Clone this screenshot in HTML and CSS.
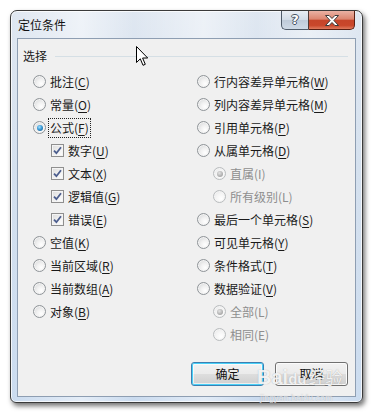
FILE: index.html
```html
<!DOCTYPE html>
<html>
<head>
<meta charset="utf-8">
<link rel="stylesheet" href="styles.css">
</head>
<body>
<div class="window">
  <div class="titlebar">
    <span class="title">定位条件</span>
    <div class="caption-btns">
      <div class="cbtn help"><span class="qmark">?</span></div>
      <div class="cbtn close">
        <svg width="14" height="11" viewBox="0 0 14 11"><path d="M0.5 0.5h3.6l2.9 3 2.9-3h3.6l-4.6 5 4.6 5h-3.6l-2.9-3-2.9 3h-3.6l4.6-5z" fill="#fff" stroke="#3b3b3b" stroke-width="1"/></svg>
      </div>
    </div>
  </div>
  <div class="client">
    <div class="group-head"><span class="group-label">选择</span><span class="group-line"></span></div>
    <div class="cols">
      <div class="col col-left">
        <div class="row"><span class="radio"></span><span class="lbl">批注(<u>C</u>)</span></div>
        <div class="row"><span class="radio"></span><span class="lbl">常量(<u>O</u>)</span></div>
        <div class="row"><span class="radio checked"></span><span class="lbl focus">公式(<u>F</u>)</span></div>
        <div class="row sub"><span class="check"><svg width="9" height="9" viewBox="0 0 9 9"><path d="M1 4.6 L3.4 7.2 L8 1.2" fill="none" stroke="#4c5e8e" stroke-width="1.8"/></svg></span><span class="lbl">数字(<u>U</u>)</span></div>
        <div class="row sub"><span class="check"><svg width="9" height="9" viewBox="0 0 9 9"><path d="M1 4.6 L3.4 7.2 L8 1.2" fill="none" stroke="#4c5e8e" stroke-width="1.8"/></svg></span><span class="lbl">文本(<u>X</u>)</span></div>
        <div class="row sub"><span class="check"><svg width="9" height="9" viewBox="0 0 9 9"><path d="M1 4.6 L3.4 7.2 L8 1.2" fill="none" stroke="#4c5e8e" stroke-width="1.8"/></svg></span><span class="lbl">逻辑值(<u>G</u>)</span></div>
        <div class="row sub"><span class="check"><svg width="9" height="9" viewBox="0 0 9 9"><path d="M1 4.6 L3.4 7.2 L8 1.2" fill="none" stroke="#4c5e8e" stroke-width="1.8"/></svg></span><span class="lbl">错误(<u>E</u>)</span></div>
        <div class="row"><span class="radio"></span><span class="lbl">空值(<u>K</u>)</span></div>
        <div class="row"><span class="radio"></span><span class="lbl">当前区域(<u>R</u>)</span></div>
        <div class="row"><span class="radio"></span><span class="lbl">当前数组(<u>A</u>)</span></div>
        <div class="row"><span class="radio"></span><span class="lbl">对象(<u>B</u>)</span></div>
      </div>
      <div class="col col-right">
        <div class="row"><span class="radio"></span><span class="lbl">行内容差异单元格(<u>W</u>)</span></div>
        <div class="row"><span class="radio"></span><span class="lbl">列内容差异单元格(<u>M</u>)</span></div>
        <div class="row"><span class="radio"></span><span class="lbl">引用单元格(<u>P</u>)</span></div>
        <div class="row"><span class="radio"></span><span class="lbl">从属单元格(<u>D</u>)</span></div>
        <div class="row sub disabled"><span class="radio checked"></span><span class="lbl">直属(I)</span></div>
        <div class="row sub disabled"><span class="radio"></span><span class="lbl">所有级别(L)</span></div>
        <div class="row"><span class="radio"></span><span class="lbl">最后一个单元格(<u>S</u>)</span></div>
        <div class="row"><span class="radio"></span><span class="lbl">可见单元格(<u>Y</u>)</span></div>
        <div class="row"><span class="radio"></span><span class="lbl">条件格式(<u>T</u>)</span></div>
        <div class="row"><span class="radio"></span><span class="lbl">数据验证(<u>V</u>)</span></div>
        <div class="row sub disabled"><span class="radio checked"></span><span class="lbl">全部(L)</span></div>
        <div class="row sub disabled"><span class="radio"></span><span class="lbl">相同(E)</span></div>
      </div>
    </div>
    <div class="buttons">
      <div class="btn btn-default">确定</div>
      <div class="btn">取消</div>
    </div>
  </div>
</div>
<svg class="cursor" width="13" height="21" viewBox="0 0 13 21"><path d="M0.5 0.5 V16.5 L4.3 12.8 L7 19.3 L9.3 18.3 L6.6 12 H11.7 Z" fill="#fff" stroke="#000" stroke-width="1" stroke-linejoin="miter"/></svg>
<div class="watermark"><span class="wm-bai">Bai<span class="wm-du">du</span></span><span class="wm-cn">经验</span><div class="wm-url">jingyan.baidu.com</div></div>
</body>
</html>
```
FILE: styles.css
```css
* { box-sizing: border-box; }
html, body { margin: 0; padding: 0; }
body {
  width: 375px;
  height: 415px;
  background: #ffffff;
  font-family: "Noto Sans CJK SC", "Noto Sans", sans-serif;
  font-size: 12px;
  color: #1a1a1a;
  position: relative;
  overflow: hidden;
}
.window {
  margin: 10px 0 0 10px;
  width: 353px;
  height: 393px;
  border: 1px solid #3a3a3a;
  border-radius: 7px 7px 6px 6px;
  background:
    linear-gradient(90deg, rgba(255,255,255,0) 0%, rgba(255,255,255,.5) 20%, rgba(255,255,255,0) 35%, rgba(255,255,255,.45) 55%, rgba(255,255,255,0) 70%, rgba(255,255,255,.4) 85%, rgba(255,255,255,0) 100%),
    linear-gradient(180deg, #dfe7f1 0%, #d4e0ee 40%, #cadbef 100%);
  box-shadow: 2px 3px 5px rgba(0,0,0,.55), inset 0 0 0 1px rgba(255,255,255,.75);
  display: flex;
  flex-direction: column;
  padding: 0 6px 5px 6px;
}
.titlebar {
  height: 27px;
  display: flex;
  justify-content: space-between;
  align-items: flex-start;
  flex: none;
}
.title {
  margin: 6px 0 0 1px;
  line-height: 16px;
  font-size: 12px;
  color: #111;
}
.caption-btns {
  display: flex;
  margin-right: 1px;
}
.cbtn {
  height: 19px;
  display: flex;
  align-items: center;
  justify-content: center;
  border: 1px solid #4f5b69;
  border-top: none;
}
.help {
  width: 27px;
  border-radius: 0 0 0 5px;
  border-right: none;
  background: linear-gradient(180deg, #e9eef4 0%, #d3dde8 48%, #bfcbd9 52%, #cfdae6 100%);
}
.qmark {
  font-family: "DejaVu Sans", sans-serif;
  font-weight: bold;
  font-size: 13px;
  line-height: 14px;
  color: #fff;
  text-shadow: 1px 0 0 #455261, -1px 0 0 #455261, 0 1px 0 #455261, 0 -1px 0 #455261;
}
.close {
  width: 47px;
  border-radius: 0 0 5px 0;
  border-color: #5a2014;
  border-left-color: #4f3a36;
  background: linear-gradient(180deg, #eab2a4 0%, #dc8570 45%, #c6452a 52%, #c9472b 80%, #e07b5e 100%);
}
.client {
  flex: 1;
  background: #f0f0f0;
  border: 1px solid #8e9eb2;
  display: flex;
  flex-direction: column;
  padding: 8px 7px 10px 0;
}
.group-head {
  height: 18px;
  display: flex;
  align-items: center;
  padding-left: 5px;
}
.group-label {
  line-height: 16px;
  color: #1a1a1a;
}
.group-line {
  flex: 1;
  height: 1px;
  background: #d5dfe5;
  margin-left: 8px;
  margin-right: 0;
}
.cols {
  display: flex;
  margin-top: 5px;
  padding-left: 15px;
}
.col-left { width: 164px; }
.col-right { flex: 1; }
.row {
  height: 23px;
  display: flex;
  align-items: center;
}
.lbl {
  line-height: 16px;
  white-space: nowrap;
}
.lbl u { text-underline-offset: 2px; }
.col-left .row.sub { padding-left: 18px; }
.col-right .row.sub { padding-left: 16px; }
.radio {
  width: 13px;
  height: 13px;
  border-radius: 50%;
  border: 1px solid #8f9498;
  background: radial-gradient(circle at 65% 70%, #ffffff 0%, #f1f1f1 40%, #cfd1d3 100%);
  box-shadow: inset 0 0 0 1px #f4f4f4;
  margin-right: 4px;
  flex: none;
  position: relative;
}
.radio.checked::after {
  content: "";
  position: absolute;
  left: 2.5px;
  top: 2.5px;
  width: 6px;
  height: 6px;
  border-radius: 50%;
  background: radial-gradient(circle at 40% 35%, #a6e1ff 0%, #3a9ad6 45%, #10507f 100%);
}
.disabled { color: #8e8e8e; }
.disabled .radio {
  border-color: #b9bcbe;
  background: radial-gradient(circle at 65% 70%, #ffffff 0%, #f4f4f4 50%, #e0e1e2 100%);
}
.disabled .radio.checked::after {
  background: radial-gradient(circle at 40% 35%, #e4e4e4 0%, #b0b0b0 60%, #9a9a9a 100%);
}
.check {
  width: 13px;
  height: 13px;
  border: 1px solid #8f8f8f;
  background: linear-gradient(135deg, #dcdcdc 0%, #f6f6f6 70%, #ffffff 100%);
  box-shadow: inset 0 0 0 1px #f4f4f4;
  margin-right: 4px;
  flex: none;
  display: flex;
  align-items: center;
  justify-content: center;
}
.focus {
  outline: 1px dotted #222;
  outline-offset: 1px;
}
.buttons {
  display: flex;
  justify-content: flex-end;
  gap: 11px;
  margin-top: auto;
}
.btn {
  width: 73px;
  height: 24px;
  border: 1px solid #707070;
  border-radius: 3px;
  background: linear-gradient(180deg, #f2f2f2 0%, #ebebeb 48%, #dddddd 52%, #cfcfcf 100%);
  box-shadow: inset 0 0 0 1px #fbfbfb;
  display: flex;
  align-items: center;
  justify-content: center;
  line-height: 16px;
  color: #111;
}
.btn-default {
  border-color: #3c7fb1;
  box-shadow: inset 0 0 0 1px #48d0f8, inset 0 0 0 2px rgba(255,255,255,.6);
  background: linear-gradient(180deg, #eaf6fd 0%, #d9f0fc 48%, #bee6fd 52%, #a7d9f5 100%);
  background: linear-gradient(180deg, #f2f2f2 0%, #ebebeb 48%, #dddddd 52%, #cfcfcf 100%);
}
.cursor {
  position: absolute;
  left: 136px;
  top: 46px;
}
.watermark {
  position: absolute;
  left: 257px;
  top: 366px;
  color: rgba(255,255,255,.85);
  text-shadow: 0 0 1px rgba(120,120,120,.6);
  white-space: nowrap;
}
.wm-bai {
  font-family: "Liberation Sans", sans-serif;
  font-weight: bold;
  font-size: 20px;
  line-height: 22px;
}
.wm-du { font-size: 15px; }
.wm-cn {
  font-size: 17px;
  line-height: 22px;
  margin-left: 2px;
}
.wm-url {
  font-family: "Liberation Sans", sans-serif;
  font-size: 9px;
  line-height: 10px;
  margin-top: 3px;
  margin-left: 3px;
  color: rgba(255,255,255,.7);
}
```
